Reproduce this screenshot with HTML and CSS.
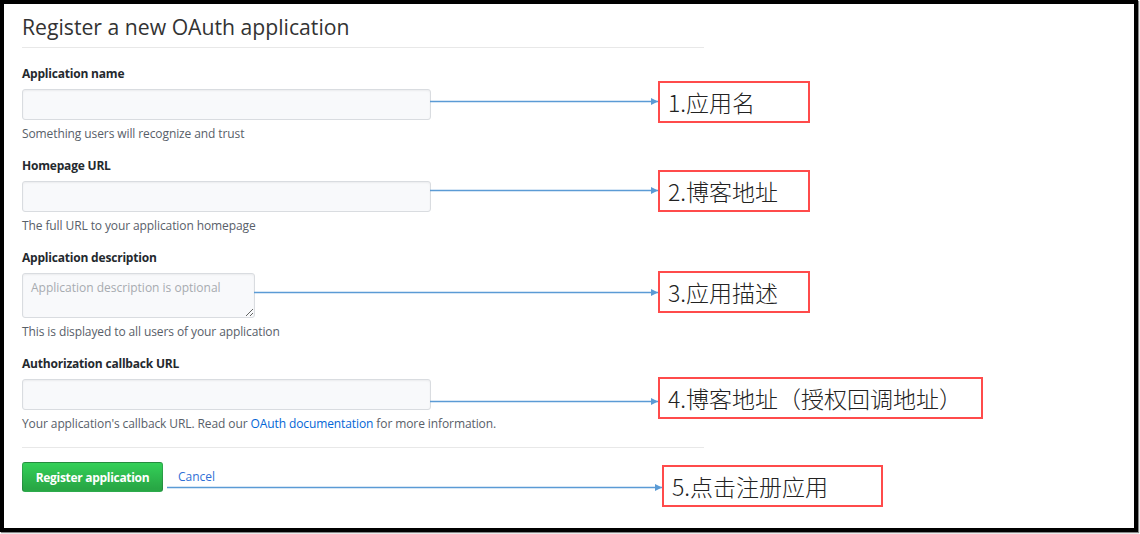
FILE: index.html
```html
<!DOCTYPE html>
<html lang="zh-CN">
<head>
<meta charset="utf-8">
<title>Register a new OAuth application</title>
<link rel="stylesheet" href="styles.css">
</head>
<body>
<div class="frame">
  <form class="form">
    <h2 class="title">Register a new OAuth application</h2>
    <div class="group">
      <label class="label">Application name</label>
      <input class="input" type="text">
      <p class="note">Something users will recognize and trust</p>
    </div>
    <div class="group">
      <label class="label">Homepage URL</label>
      <input class="input" type="text">
      <p class="note">The full URL to your application homepage</p>
    </div>
    <div class="group">
      <label class="label">Application description</label>
      <textarea class="textarea" placeholder="Application description is optional"></textarea>
      <p class="note">This is displayed to all users of your application</p>
    </div>
    <div class="group">
      <label class="label">Authorization callback URL</label>
      <input class="input" type="text">
      <p class="note">Your application's callback URL. Read our <a class="link" href="#">OAuth documentation</a> for more information.</p>
    </div>
    <div class="actions">
      <button class="btn" type="button">Register application</button>
      <a class="cancel" href="#">Cancel</a>
    </div>
  </form>

  <svg class="arrows" width="1134" height="528" viewBox="0 0 1134 528">
    <defs>
      <marker id="head" markerWidth="8" markerHeight="8" refX="7" refY="4" orient="auto" markerUnits="userSpaceOnUse">
        <path d="M0,0.5 L7,4 L0,7.5 Z" fill="#5b9bd5"/>
      </marker>
    </defs>
    <line x1="426" y1="97.5" x2="654" y2="97.5" marker-end="url(#head)"/>
    <line x1="426" y1="186.5" x2="654" y2="186.5" marker-end="url(#head)"/>
    <line x1="250" y1="288.5" x2="654" y2="288.5" marker-end="url(#head)"/>
    <line x1="426" y1="397.5" x2="654" y2="397.5" marker-end="url(#head)"/>
    <line x1="163" y1="483.5" x2="658" y2="483.5" marker-end="url(#head)"/>
  </svg>

  <div class="note-box box1">1.应用名</div>
  <div class="note-box box2">2.博客地址</div>
  <div class="note-box box3">3.应用描述</div>
  <div class="note-box box4">4.博客地址（授权回调地址）</div>
  <div class="note-box box5">5.点击注册应用</div>
</div>
</body>
</html>
```
FILE: styles.css
```css
* { box-sizing: border-box; }
html, body { margin: 0; padding: 0; background: #fff; }
body {
  width: 1140px;
  height: 534px;
  overflow: hidden;
  font-family: "Open Sans", "Noto Sans", sans-serif;
}
.frame {
  position: relative;
  width: 1138px;
  height: 532px;
  border: 4px solid #000;
  box-shadow: 1px 1px 1px #888;
  background: #fff;
  padding: 0 0 0 18px;
}
.form {
  width: 682px;
  display: flex;
  flex-direction: column;
}
.title {
  margin: 8px 0 0;
  font-weight: 400;
  font-size: 21.2px;
  line-height: 30px;
  color: #333;
  padding-bottom: 5px;
  border-bottom: 1px solid #e8e8e8;
  margin-bottom: 17px;
}
.group {
  display: flex;
  flex-direction: column;
  align-items: flex-start;
  margin-bottom: 14px;
}
.label {
  font-size: 12px;
  font-weight: 700;
  line-height: 18px;
  color: #24292e;
  margin-bottom: 6px;
  letter-spacing: -0.2px;
}
.input {
  width: 409px;
  height: 31px;
  background: #f8f9fb;
  border: 1px solid #d9dce0;
  border-radius: 3px;
  box-shadow: inset 0 1px 2px rgba(27,31,35,0.06);
  margin: 0;
}
.textarea {
  width: 233px;
  height: 45px;
  background: #f8f9fb;
  border: 1px solid #d9dce0;
  border-radius: 3px;
  box-shadow: inset 0 1px 2px rgba(27,31,35,0.06);
  margin: 0;
  padding: 5px 8px;
  font-family: "Open Sans", "Noto Sans", sans-serif;
  font-size: 12px;
  resize: vertical;
}
.textarea::placeholder { color: #a7abb0; }
.note {
  margin: 5px 0 0;
  font-size: 12px;
  line-height: 18px;
  color: #586069;
  letter-spacing: -0.1px;
}
.link { color: #0366d6; text-decoration: none; }
.actions {
  border-top: 1px solid #e8e8e8;
  margin-top: 0;
  padding-top: 14px;
  display: flex;
  align-items: center;
  gap: 15px;
}
.btn {
  width: 141px;
  height: 30px;
  border: 1px solid rgba(27,31,35,0.2);
  border-radius: 3px;
  background: linear-gradient(#34d058, #28a745 90%);
  color: #fff;
  font-family: "Open Sans", "Noto Sans", sans-serif;
  font-weight: 700;
  font-size: 12px;
  letter-spacing: -0.3px;
  padding: 0;
}
.cancel {
  color: #2f6fd6;
  font-size: 12px;
  text-decoration: none;
  line-height: 18px;
}
.arrows {
  position: absolute;
  left: 0;
  top: 0;
}
.arrows line {
  stroke: #5b9bd5;
  stroke-width: 1.5;
}
.note-box {
  position: absolute;
  border: 2px solid #ff4b4b;
  background: #fff;
  font-family: "Noto Sans CJK SC", sans-serif;
  font-weight: 300;
  font-size: 23px;
  color: #222;
  display: flex;
  align-items: center;
  padding-left: 8px;
  height: 42px;
}
.box1 { left: 654px; top: 77px; width: 152px; }
.box2 { left: 654px; top: 166px; width: 152px; }
.box3 { left: 654px; top: 267px; width: 152px; }
.box4 { left: 654px; top: 373px; width: 325px; }
.box5 { left: 658px; top: 461px; width: 221px; }
```
